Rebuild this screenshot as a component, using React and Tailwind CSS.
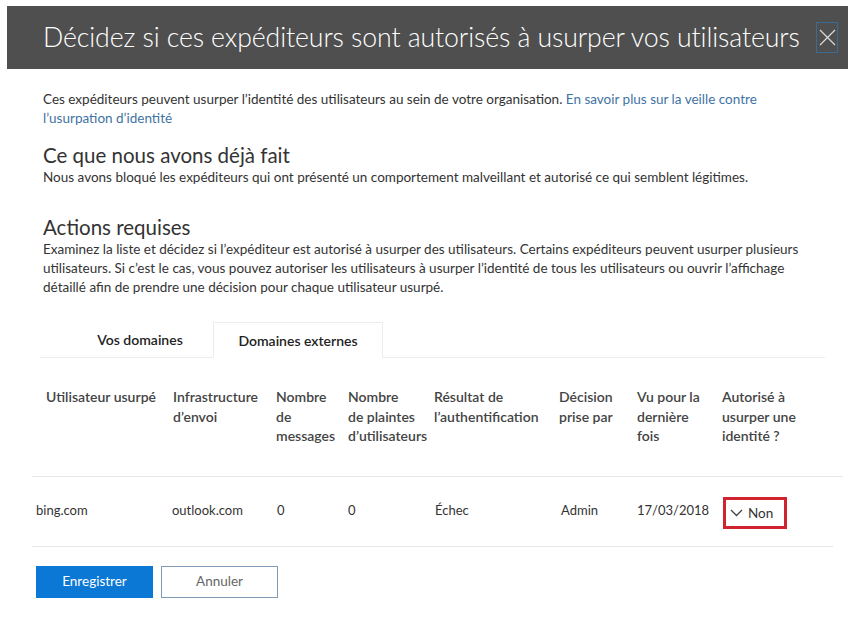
import React from 'react';

const headCols = 'grid grid-cols-[127px_103px_72px_86px_125px_78px_85px_1fr]';
const rowCols = 'grid grid-cols-[136px_105px_71px_87px_126px_76px_86px_1fr]';

const headers = [
  ['Utilisateur usurpé'],
  ['Infrastructure', 'd’envoi'],
  ['Nombre', 'de', 'messages'],
  ['Nombre', 'de plaintes', 'd’utilisateurs'],
  ['Résultat de', 'l’authentification'],
  ['Décision', 'prise par'],
  ['Vu pour la', 'dernière', 'fois'],
  ['Autorisé à', 'usurper une', 'identité ?'],
];

const SpoofDecisionPanel = () => {
  return (
    <div className="w-[858px] h-[625px] bg-white font-['Lato',sans-serif] text-[#333333] overflow-hidden">
      {/* Header bar */}
      <div className="mt-[6px] ml-[7px] mr-[10px] h-[63px] bg-[#4f4f4f] flex items-center pl-[36px] pr-[10px]">
        <h1 className="flex-1 text-white text-[26.7px] font-light tracking-[-0.1px]">
          Décidez si ces expéditeurs sont autorisés à usurper vos utilisateurs
        </h1>
        <button className="w-[22px] h-[31px] border border-[#3d6a92] flex items-center justify-center">
          <svg width="17" height="17" viewBox="0 0 17 17" fill="none" stroke="#d8d8d8" strokeWidth="1.3">
            <path d="M1 1L16 16M16 1L1 16" />
          </svg>
        </button>
      </div>

      {/* Intro */}
      <div className="pl-[43px] pr-[45px] pt-[21px]">
        <p className="text-[13.5px] leading-[19px]">
          Ces expéditeurs peuvent usurper l’identité des utilisateurs au sein de votre organisation.{' '}
          <a className="text-[#3f73a3]">En savoir plus sur la veille contre l’usurpation d’identité</a>
        </p>

        <h2 className="mt-[15px] text-[20.5px] leading-[24px]">Ce que nous avons déjà fait</h2>
        <p className="mt-[1px] text-[13.5px] leading-[19px]">
          Nous avons bloqué les expéditeurs qui ont présenté un comportement malveillant et autorisé ce qui semblent légitimes.
        </p>

        <h2 className="mt-[28px] text-[20.5px] leading-[24px]">Actions requises</h2>
        <p className="mt-[1px] text-[13.5px] leading-[19px]">
          Examinez la liste et décidez si l’expéditeur est autorisé à usurper des utilisateurs. Certains expéditeurs peuvent usurper plusieurs utilisateurs. Si c’est le cas, vous pouvez autoriser les utilisateurs à usurper l’identité de tous les utilisateurs ou ouvrir l’affichage détaillé afin de prendre une décision pour chaque utilisateur usurpé.
        </p>
      </div>

      {/* Tabs */}
      <div className="mt-[25px] ml-[40px] mr-[33px] flex items-end border-b border-[#ececec] h-[36px]">
        <div className="w-[173px] h-[35px] flex items-center justify-center pl-[27px] text-[14px] font-semibold text-[#222]">
          Vos domaines
        </div>
        <div className="w-[170px] h-[36px] -mb-px flex items-center justify-center text-[14px] font-semibold text-[#222] border border-[#ececec] border-b-white bg-white">
          Domaines externes
        </div>
      </div>

      {/* Table */}
      <div className="ml-[32px] mr-[15px]">
        <div className={`${headCols} pt-[29px] pb-[30px] pl-[14px] text-[14px] leading-[19.5px] font-semibold text-[#444]`}>
          {headers.map((lines, i) => (
            <div key={i}>
              {lines.map((l, j) => (
                <div key={j}>{l}</div>
              ))}
            </div>
          ))}
        </div>
        <div className="border-t border-[#e6e6e6]" />
        <div className={`${rowCols} items-center h-[69px] pl-[4px] text-[13px] text-[#333] mr-[10px]`}>
          <div>bing.com</div>
          <div>outlook.com</div>
          <div>0</div>
          <div>0</div>
          <div>Échec</div>
          <div>Admin</div>
          <div>17/03/2018</div>
          <div>
            <div className="w-[64px] h-[32px] border-[3px] border-[#d1222f] flex items-center pl-[4px] gap-[5px] mt-[4px]">
              <svg width="13" height="8" viewBox="0 0 13 8" fill="none" stroke="#444" strokeWidth="1.3">
                <path d="M1 1L6.5 6.5L12 1" />
              </svg>
              <span className="text-[13.5px]">Non</span>
            </div>
          </div>
        </div>
        <div className="border-t border-[#e6e6e6] mr-[10px]" />
      </div>

      {/* Buttons */}
      <div className="mt-[19px] ml-[36px] flex gap-[8px]">
        <button className="w-[117px] h-[32px] bg-[#0a78d4] text-white text-[13.5px]">Enregistrer</button>
        <button className="w-[117px] h-[32px] border border-[#7f9ab3] text-[#666] text-[13.5px] bg-white">Annuler</button>
      </div>
    </div>
  );
};

export default function App() {
  return <SpoofDecisionPanel />;
}
